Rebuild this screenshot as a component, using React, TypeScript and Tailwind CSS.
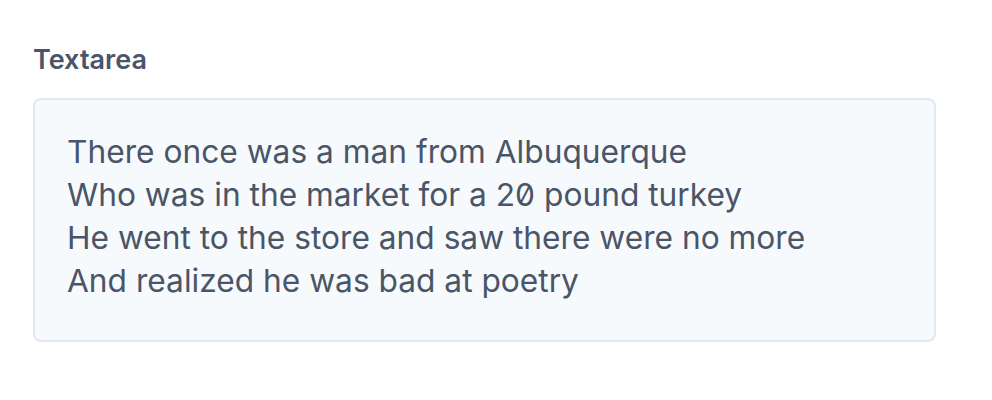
import React from "react";

const poem = `There once was a man from Albuquerque
Who was in the market for a 20 pound turkey
He went to the store and saw there were no more
And realized he was bad at poetry`;

export default function App() {
  return (
    <div className="min-h-screen bg-white px-[33px] pt-[44px] font-['Inter',sans-serif]">
      <div className="w-[903px]">
        <label className="block text-[27px] font-semibold leading-[32px] text-[#4a5568] mb-[22px]">
          Textarea
        </label>
        <textarea
          readOnly
          defaultValue={poem}
          rows={4}
          className="block w-full h-[244px] resize-none rounded-[8px] border-2 border-[#e2e8f0] bg-[#f7fafc] px-[32px] pt-[30px] text-[31.7px] leading-[43px] text-[#4a5568] font-['Inter',sans-serif] [font-feature-settings:'zero'] outline-none"
        />
      </div>
    </div>
  );
}
